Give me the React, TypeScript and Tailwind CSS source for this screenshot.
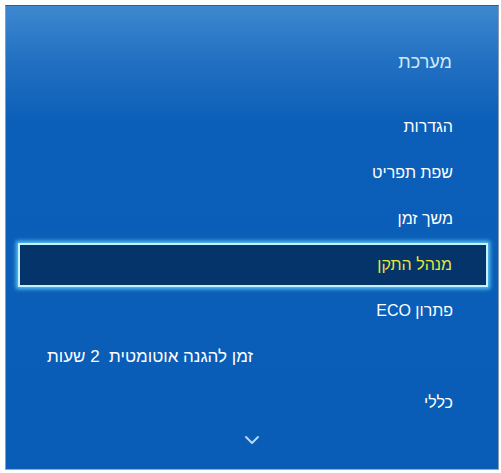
import { ChevronDown } from 'lucide-react';

const items = [
  { label: 'הגדרות' },
  { label: 'שפת תפריט' },
  { label: 'משך זמן' },
  { label: 'מנהל התקן', active: true },
  { label: 'פתרון ECO' },
  { label: 'זמן להגנה אוטומטית\u00a0\u00a02 שעות', left: true },
  { label: 'כללי' },
];

export default function App() {
  return (
    <div
      className="w-[501px] h-[473px] bg-white pl-[5px] pt-[5px] pr-[2px] pb-[3px]"
      style={{ fontFamily: '"Liberation Sans", "DejaVu Sans", Arial, sans-serif' }}
    >
      <div
        dir="rtl"
        className="h-full flex flex-col border border-[#8c9cb0] border-t-[#4b5563] border-b-[#7fb2e4] bg-[linear-gradient(to_bottom,#3f88cf_0px,#2270c2_55px,#0c5fb8_115px,#0a5db7_100%)]"
      >
        {/* Title */}
        <div className="h-[46px] mt-[33px] mb-[19px] flex items-center pr-[46px] text-[18px] text-[#cdebf7]">
          מערכת
        </div>

        {/* Menu rows */}
        <div className="flex flex-col">
          {items.map((it) =>
            it.active ? (
              <div key={it.label} className="h-[46px] flex items-center pr-[10px] pl-[12px]">
                <div className="h-[44px] w-full flex items-center pr-[34px] bg-[#05346a] border-2 border-[#c4f3ff] shadow-[0_0_4px_2px_#5cc4f5] text-[16px] text-[#e6e83a]">
                  {it.label}
                </div>
              </div>
            ) : (
              <div
                key={it.label}
                className={`h-[46px] flex items-center text-white ${
                  it.left ? 'justify-end pl-[41px] text-[17px]' : 'pr-[45px] text-[16px]'
                }`}
              >
                {it.label}
              </div>
            )
          )}
        </div>

        {/* Scroll hint */}
        <div className="flex-1 flex items-center justify-center pb-[16px]">
          <ChevronDown className="w-[24px] h-[24px] text-[#b6d8f5]" strokeWidth={2} />
        </div>
      </div>
    </div>
  );
}
